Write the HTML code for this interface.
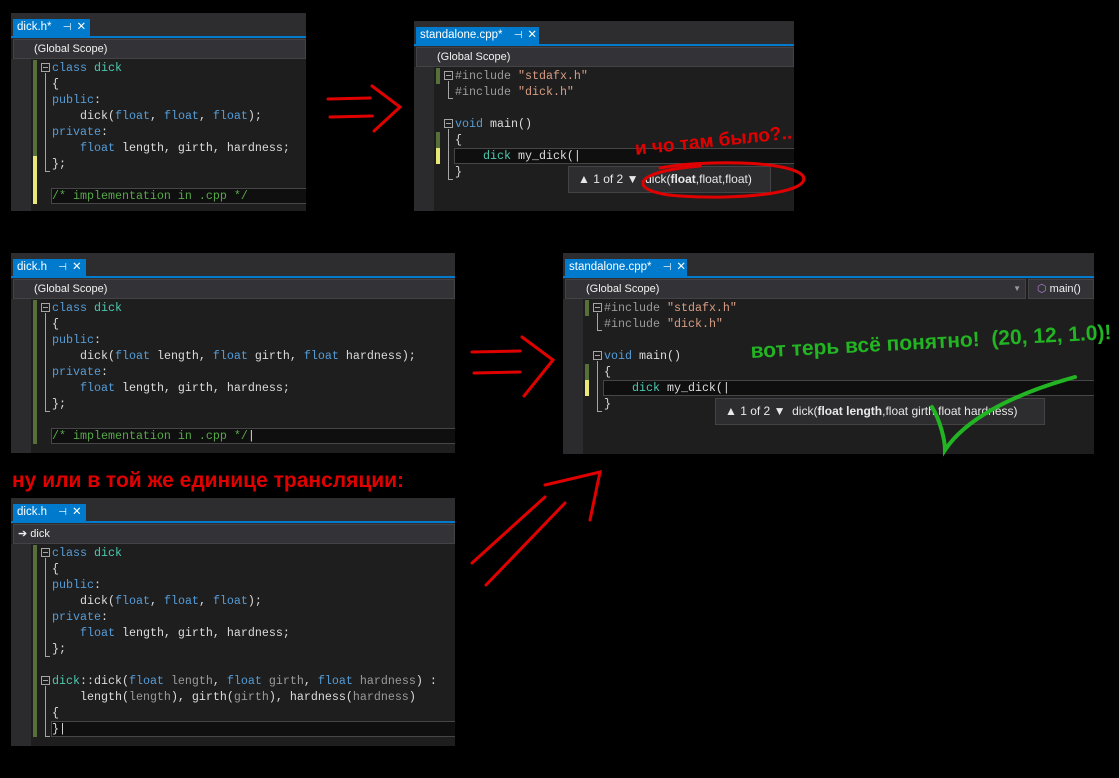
<!DOCTYPE html>
<html><head><meta charset="utf-8"><style>
*{margin:0;padding:0;box-sizing:border-box}
body{width:1119px;height:778px;background:#000;position:relative;overflow:hidden;font-family:"Liberation Sans",sans-serif}
.p{position:absolute;background:#1e1e1e;overflow:hidden}
.tb{position:absolute;left:0;top:0;right:0;height:26px;background:#2d2d30}
.tab{position:absolute;left:2px;top:6px;height:18px;background:#007acc;color:#fff;font-size:11.5px;line-height:17px;padding-left:4px;white-space:nowrap}
.tab i{font-style:normal;margin-left:8px;font-size:10px}
.tab b{font-weight:normal;margin-left:5px}
.bl{position:absolute;left:0;right:0;top:23px;height:2px;background:#007acc}
.sc{position:absolute;left:2px;right:0;top:26px;height:20px;background:#333337;border:1px solid #434346;color:#f1f1f1;font-size:11px;line-height:18px;padding-left:20px}
.mg{position:absolute;left:0;top:46px;width:20px;bottom:0;background:#2b2b2d}
.ln{position:absolute;left:41px;height:16px;line-height:16px;font-family:"Liberation Mono",monospace;font-size:11.67px;color:#dcdcdc;white-space:pre}
.k{color:#569cd6}.t{color:#4ec9b0}.c{color:#57a64a}.pp{color:#9b9b9b}.s{color:#d69d85}.g{color:#9a9a9a}
.gb{position:absolute;left:22px;width:4px;background:#57703a}
.yb{position:absolute;left:22px;width:4px;background:#e8e878}
.fb{position:absolute;left:30px;width:9px;height:9px;border:1px solid #a5a5a5}
.fb:after{content:"";position:absolute;left:1px;top:3px;width:5px;height:1px;background:#a5a5a5}
.fl{position:absolute;left:34px;width:1px;background:#a5a5a5}
.fe{position:absolute;left:34px;width:5px;height:1px;background:#a5a5a5}
.cur{position:absolute;left:40px;right:0;height:16px;background:#0f0f0f;border:1px solid #464646;border-right:none}
.tip{position:absolute;background:#2d2d30;border:1px solid #434346;color:#e8e8e8;font-size:12px;line-height:24px;padding-left:9px;white-space:nowrap}
.hw{position:absolute;font-family:"Liberation Sans",sans-serif;font-weight:bold;white-space:nowrap}
</style></head><body>

<div class="p" style="left:11px;top:13px;width:295px;height:198px">
<div class="tb"></div><div class="tab" style="width:77px">dick.h* <i>⊣</i><b>✕</b></div><div class="bl"></div>
<div class="sc">(Global Scope)</div><div class="mg"></div>
<div class="gb" style="top:47px;height:96px"></div><div class="yb" style="top:143px;height:48px"></div>
<div class="fb" style="top:50px"></div><div class="fl" style="top:60px;height:99px"></div><div class="fe" style="top:158px"></div>
<div class="cur" style="top:175px"></div>
<div class="ln" style="top:47px"><span class="k">class</span> <span class="t">dick</span></div>
<div class="ln" style="top:63px">{</div>
<div class="ln" style="top:79px"><span class="k">public</span>:</div>
<div class="ln" style="top:95px">    dick(<span class="k">float</span>, <span class="k">float</span>, <span class="k">float</span>);</div>
<div class="ln" style="top:111px"><span class="k">private</span>:</div>
<div class="ln" style="top:127px">    <span class="k">float</span> length, girth, hardness;</div>
<div class="ln" style="top:143px">};</div>
<div class="ln c" style="top:175px">/* implementation in .cpp */</div>
</div>

<div class="p" style="left:414px;top:21px;width:380px;height:190px">
<div class="tb"></div><div class="tab" style="width:123px">standalone.cpp* <i>⊣</i><b>✕</b></div><div class="bl"></div>
<div class="sc">(Global Scope)</div><div class="mg"></div>
<div class="gb" style="top:47px;height:16px"></div><div class="gb" style="top:111px;height:16px"></div><div class="yb" style="top:127px;height:16px"></div>
<div class="fb" style="top:50px"></div><div class="fl" style="top:60px;height:18px"></div><div class="fe" style="top:77px"></div>
<div class="fb" style="top:98px"></div><div class="fl" style="top:108px;height:51px"></div><div class="fe" style="top:158px"></div>
<div class="cur" style="top:127px"></div>
<div class="ln pp" style="top:47px">#include <span class="s">"stdafx.h"</span></div>
<div class="ln pp" style="top:63px">#include <span class="s">"dick.h"</span></div>
<div class="ln" style="top:95px"><span class="k">void</span> main()</div>
<div class="ln" style="top:111px">{</div>
<div class="ln" style="top:127px">    <span class="t">dick</span> my_dick(|</div>
<div class="ln" style="top:143px">}</div>
<div class="tip" style="left:154px;top:145px;width:203px;height:27px">▲ 1 of 2 ▼ &nbsp;dick(<b>float</b>,float,float)</div>
</div>

<div class="p" style="left:11px;top:253px;width:444px;height:200px">
<div class="tb"></div><div class="tab" style="width:73px">dick.h <i>⊣</i><b>✕</b></div><div class="bl"></div>
<div class="sc">(Global Scope)</div><div class="mg"></div>
<div class="gb" style="top:47px;height:144px"></div>
<div class="fb" style="top:50px"></div><div class="fl" style="top:60px;height:99px"></div><div class="fe" style="top:158px"></div>
<div class="cur" style="top:175px"></div>
<div class="ln" style="top:47px"><span class="k">class</span> <span class="t">dick</span></div>
<div class="ln" style="top:63px">{</div>
<div class="ln" style="top:79px"><span class="k">public</span>:</div>
<div class="ln" style="top:95px">    dick(<span class="k">float</span> length, <span class="k">float</span> girth, <span class="k">float</span> hardness);</div>
<div class="ln" style="top:111px"><span class="k">private</span>:</div>
<div class="ln" style="top:127px">    <span class="k">float</span> length, girth, hardness;</div>
<div class="ln" style="top:143px">};</div>
<div class="ln" style="top:175px"><span class="c">/* implementation in .cpp */</span>|</div>
</div>

<div class="p" style="left:563px;top:253px;width:531px;height:201px">
<div class="tb"></div><div class="tab" style="width:122px">standalone.cpp* <i>⊣</i><b>✕</b></div><div class="bl"></div>
<div class="sc" style="right:68px">(Global Scope)<span style="position:absolute;right:4px;top:0;font-size:8px;color:#999">▼</span></div>
<div class="sc" style="left:465px;padding-left:8px"><span style="color:#b180d7">⬡</span> main()</div>
<div class="mg"></div>
<div class="gb" style="top:47px;height:16px"></div><div class="gb" style="top:111px;height:16px"></div><div class="yb" style="top:127px;height:16px"></div>
<div class="fb" style="top:50px"></div><div class="fl" style="top:60px;height:18px"></div><div class="fe" style="top:77px"></div>
<div class="fb" style="top:98px"></div><div class="fl" style="top:108px;height:51px"></div><div class="fe" style="top:158px"></div>
<div class="cur" style="top:127px"></div>
<div class="ln pp" style="top:47px">#include <span class="s">"stdafx.h"</span></div>
<div class="ln pp" style="top:63px">#include <span class="s">"dick.h"</span></div>
<div class="ln" style="top:95px"><span class="k">void</span> main()</div>
<div class="ln" style="top:111px">{</div>
<div class="ln" style="top:127px">    <span class="t">dick</span> my_dick(|</div>
<div class="ln" style="top:143px">}</div>
<div class="tip" style="left:152px;top:145px;width:330px;height:27px">▲ 1 of 2 ▼ &nbsp;dick(<b>float length</b>,float girth,float hardness)</div>
</div>

<div class="p" style="left:11px;top:498px;width:444px;height:248px">
<div class="tb"></div><div class="tab" style="width:73px">dick.h <i>⊣</i><b>✕</b></div><div class="bl"></div>
<div class="sc" style="padding-left:4px">➔ dick</div><div class="mg"></div>
<div class="gb" style="top:47px;height:192px"></div>
<div class="fb" style="top:50px"></div><div class="fl" style="top:60px;height:99px"></div><div class="fe" style="top:158px"></div>
<div class="fb" style="top:178px"></div><div class="fl" style="top:188px;height:51px"></div><div class="fe" style="top:238px"></div>
<div class="cur" style="top:223px"></div>
<div class="ln" style="top:47px"><span class="k">class</span> <span class="t">dick</span></div>
<div class="ln" style="top:63px">{</div>
<div class="ln" style="top:79px"><span class="k">public</span>:</div>
<div class="ln" style="top:95px">    dick(<span class="k">float</span>, <span class="k">float</span>, <span class="k">float</span>);</div>
<div class="ln" style="top:111px"><span class="k">private</span>:</div>
<div class="ln" style="top:127px">    <span class="k">float</span> length, girth, hardness;</div>
<div class="ln" style="top:143px">};</div>
<div class="ln" style="top:175px"><span class="t">dick</span>::dick(<span class="k">float</span> <span class="g">length</span>, <span class="k">float</span> <span class="g">girth</span>, <span class="k">float</span> <span class="g">hardness</span>) :</div>
<div class="ln" style="top:191px">    length(<span class="g">length</span>), girth(<span class="g">girth</span>), hardness(<span class="g">hardness</span>)</div>
<div class="ln" style="top:207px">{</div>
<div class="ln" style="top:223px">}|</div>
</div>

<svg style="position:absolute;left:0;top:0" width="1119" height="778">
<g fill="none" stroke="#e00000" stroke-width="3" stroke-linecap="round">
<path d="M328 99 L370 98"/><path d="M330 117 L372 116"/><path d="M372 86 L400 107 L374 131"/>
<path d="M472 352 L520 351"/><path d="M474 373 L520 372"/><path d="M522 337 L553 360 L524 396"/>
<path d="M472 563 L545 497"/><path d="M486 585 L565 503"/><path d="M545 485 L600 472 L590 520"/>
<path d="M660 168 C700 160 790 160 803 176 C812 193 740 200 680 196 C630 193 625 172 700 166"/>
</g>
<g fill="none" stroke="#22b422" stroke-width="4" stroke-linecap="round">
<path d="M932 407 C940 420 945 440 945 450 C965 420 1010 395 1075 377"/>
</g>
</svg>
<div class="hw" style="left:634px;top:139px;font-size:19px;color:#e00000;transform:rotate(-6deg);transform-origin:left top">и чо там было?..</div>
<div class="hw" style="left:12px;top:469px;font-size:21px;color:#e00000">ну или в той же единице трансляции:</div>
<div class="hw" style="left:750px;top:340px;font-size:21px;color:#22b422;transform:rotate(-3deg);transform-origin:left top">вот терь всё понятно! &nbsp;(20, 12, 1.0)!</div>
</body></html>
